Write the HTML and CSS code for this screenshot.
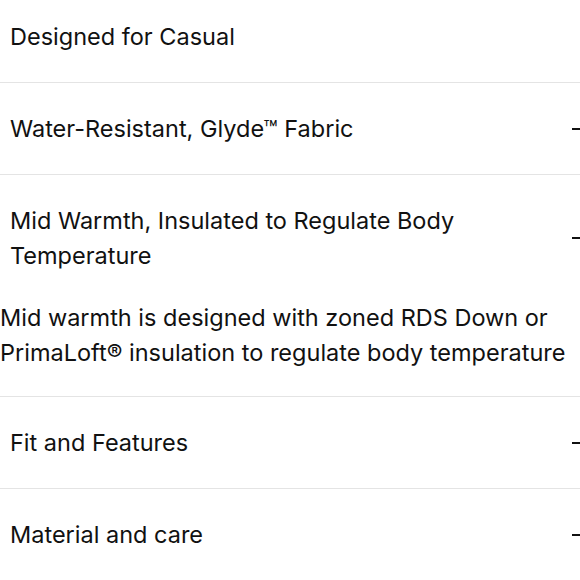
FILE: index.html
```html
<!DOCTYPE html>
<html>
<head>
<meta charset="utf-8">
<link rel="stylesheet" href="styles.css">
</head>
<body>
<div class="accordion">
  <div class="item">
    <div class="head"><span class="title">Designed for Casual</span></div>
  </div>
  <div class="item">
    <div class="head"><span class="title">Water-Resistant, Glyde™ Fabric</span><span class="icon"></span></div>
  </div>
  <div class="item item-open">
    <div class="head"><span class="title">Mid Warmth, Insulated to Regulate Body Temperature</span><span class="icon"></span></div>
    <p class="desc">Mid warmth is designed with zoned RDS Down or PrimaLoft® insulation to regulate body temperature</p>
  </div>
  <div class="item">
    <div class="head"><span class="title">Fit and Features</span><span class="icon"></span></div>
  </div>
  <div class="item">
    <div class="head"><span class="title">Material and care</span><span class="icon"></span></div>
  </div>
</div>
</body>
</html>
```
FILE: styles.css
```css
html, body {
  margin: 0;
  padding: 0;
  background: #fff;
  overflow: hidden;
}
body {
  font-family: Inter, "Noto Sans", sans-serif;
  color: #111;
  font-size: 23.5px;
  line-height: 35px;
}
.accordion {
  width: 600px;
  margin-top: -9px;
}
.item {
  border-bottom: 1px solid #e4e4e4;
  padding: 28px 0 28px 0;
}
.item-open {
  padding-bottom: 26px;
}
.head {
  display: flex;
  align-items: center;
  justify-content: space-between;
  padding-left: 10px;
}
.title {
  max-width: 470px;
}
.icon {
  width: 16px;
  height: 2px;
  background: #111;
  margin-right: 12px;
  flex-shrink: 0;
}
.desc {
  margin: 27px 0 0 0;
  width: 578px;
}
```
